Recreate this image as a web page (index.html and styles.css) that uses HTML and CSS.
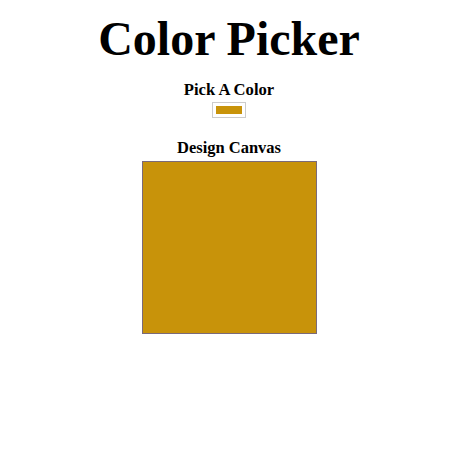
FILE: index.html
```html
<!DOCTYPE html>
<html lang="en">
<head>
    <meta charset="UTF-8">
    <meta name="viewport" content="width=device-width, initial-scale=1.0">
    <title>Color Picker</title>
    <link rel="stylesheet" href="styles.css">
</head>
<body>
    <h1>Color Picker</h1>

    <div class="picker">
        <label for="color">Pick A Color</label>
        <input type="color" id="color" value="#c8930a">
    </div>

    <div class="canvas-wrap">
        <h4>Design Canvas</h4>
        <div class="canvas" id="canvas"></div>
    </div>

    <script>
        var input = document.getElementById("color");
        var canvas = document.getElementById("canvas");

        input.addEventListener("input", function(){
            canvas.style.backgroundColor = input.value;
        });
    </script>
</body>
</html>
```

FILE: styles.css
```css
body {
    font-family: "Liberation Serif", "Times New Roman", serif;
    margin: 0;
    display: flex;
    flex-direction: column;
    align-items: center;
}

h1 {
    font-size: 48px;
    margin: 12px 0 0 0;
    line-height: 53px;
}

.picker {
    display: flex;
    flex-direction: column;
    align-items: center;
    margin-top: 16px;
}

.picker label {
    font-weight: bold;
    font-size: 16.6px;
    line-height: 18px;
}

input[type="color"] {
    width: 34px;
    height: 16px;
    padding: 0;
    margin: 3px 0 0 0;
    border: 1px solid #ccc;
    background: #fff;
}

input[type="color"]::-webkit-color-swatch-wrapper {
    padding: 3px;
}

input[type="color"]::-webkit-color-swatch {
    border: none;
}

.canvas-wrap {
    display: flex;
    flex-direction: column;
    align-items: center;
    margin-top: 21px;
}

h4 {
    font-size: 16.5px;
    margin: 0;
    line-height: 18px;
}

.canvas {
    width: 173px;
    height: 171px;
    margin-top: 4px;
    background-color: #c8930a;
    border: 1px solid #7a6a7a;
}
```
